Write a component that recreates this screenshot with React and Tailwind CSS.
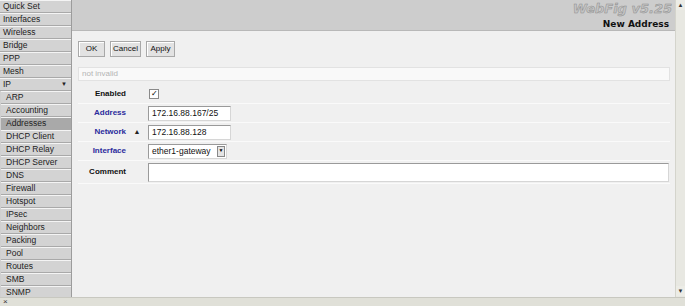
import React from 'react';

const menu = [
  { label: 'Quick Set' },
  { label: 'Interfaces' },
  { label: 'Wireless' },
  { label: 'Bridge' },
  { label: 'PPP' },
  { label: 'Mesh' },
  { label: 'IP', open: true },
  { label: 'ARP', sub: true },
  { label: 'Accounting', sub: true },
  { label: 'Addresses', sub: true, active: true },
  { label: 'DHCP Client', sub: true },
  { label: 'DHCP Relay', sub: true },
  { label: 'DHCP Server', sub: true },
  { label: 'DNS', sub: true },
  { label: 'Firewall', sub: true },
  { label: 'Hotspot', sub: true },
  { label: 'IPsec', sub: true },
  { label: 'Neighbors', sub: true },
  { label: 'Packing', sub: true },
  { label: 'Pool', sub: true },
  { label: 'Routes', sub: true },
  { label: 'SMB', sub: true },
  { label: 'SNMP', sub: true },
];

const Row = ({ label, blue, marker, children, tall }) => (
  <div className={`flex items-center border-b border-[#fafafa] ${tall ? 'h-[23px]' : 'h-[19px]'}`}>
    <div className={`w-[48px] text-right font-bold ${blue ? 'text-[#2b2b9c]' : 'text-[#111]'}`}>{label}</div>
    <div className="w-[22px] flex justify-center text-[7px] text-[#222]">{marker}</div>
    <div className="flex-1 pr-[3px]">{children}</div>
  </div>
);

const Input = ({ value, className }) => (
  <div className={`h-[15px] bg-white border border-[#9a9a9a] border-r-[#d6d6d6] border-b-[#d6d6d6] px-[3px] leading-[13px] text-[8.5px] text-[#111] ${className}`}>
    {value}
  </div>
);

const Btn = ({ children, w }) => (
  <div className={`${w} h-[16px] flex items-center justify-center bg-[#e2e2e2] border border-[#a8a8a8] shadow-[inset_1px_1px_0_#fff] text-[8px] text-[#111]`}>
    {children}
  </div>
);

export default function App() {
  return (
    <div className="w-[685px] h-[306px] flex flex-col bg-[#f0f0f0] text-[8px] overflow-hidden" style={{ fontFamily: '"Liberation Sans", Arial, sans-serif' }}>
      <div className="flex flex-1 min-h-0">
        {/* Menu */}
        <div className="w-[72px] flex flex-col bg-[#d0d0d0] border-r border-[#9c9c9c]">
          {menu.map((m) => (
            <div
              key={m.label}
              className={`h-[13px] shrink-0 flex items-center justify-between border-b border-t border-t-[#f4f4f4] border-b-[#a9a9a9] pr-[4px] text-[8.5px] ${
                m.sub ? 'pl-[5px] ml-[1px]' : 'pl-[3px]'
              } ${m.active ? 'bg-[#a9a9a9]' : 'bg-[#d3d3d3]'} text-[#222]`}
            >
              <span>{m.label}</span>
              {m.open && <span className="text-[6px]">▼</span>}
            </div>
          ))}
          <div className="flex-1 bg-[#d0d0d0]" />
        </div>

        {/* Main */}
        <div className="flex-1 flex flex-col min-w-0">
          <div className="h-[31px] shrink-0 bg-[#cdcdcd] border-b border-[#b8b8b8] flex flex-col items-end pr-[3px]">
            <div
              className="text-[13px] font-bold italic leading-[15px] mt-[1px] text-[#c4c4c4]"
              style={{ fontFamily: '"DejaVu Sans", sans-serif', WebkitTextStroke: '0.5px #8e8e8e' }}
            >
              WebFig v5.25
            </div>
            <div className="text-[9px] font-bold leading-[12px] mt-[2px] text-[#111] pr-[3px]" style={{ fontFamily: '"DejaVu Sans", sans-serif' }}>
              New Address
            </div>
          </div>

          <div className="flex-1 pl-[6px] pr-[5px]">
            <div className="flex gap-[5px] mt-[10px]">
              <Btn w="w-[27px]">OK</Btn>
              <Btn w="w-[31px]">Cancel</Btn>
              <Btn w="w-[29px]">Apply</Btn>
            </div>

            <div className="mt-[10px] h-[14px] bg-[#f9f9f9] border border-[#e2e2e2] text-[#b4b4b4] text-[8px] leading-[12px] px-[3px]">
              not invalid
            </div>

            <div className="mt-[4px]">
              <Row label="Enabled">
                <div className="w-[10px] h-[10px] ml-[1px] bg-white border border-[#8a8a8a] flex items-center justify-center text-[8px] leading-none">
                  ✓
                </div>
              </Row>
              <Row label="Address" blue>
                <Input value="172.16.88.167/25" className="w-[83px]" />
              </Row>
              <Row label="Network" blue marker="▲">
                <Input value="172.16.88.128" className="w-[83px]" />
              </Row>
              <Row label="Interface" blue>
                <div className="w-[79px] h-[15px] flex bg-white border border-[#9a9a9a] border-r-[#d6d6d6] border-b-[#d6d6d6]">
                  <div className="flex-1 px-[3px] leading-[13px] text-[8.5px] text-[#111]">ether1-gateway</div>
                  <div className="w-[8px] my-[1px] mr-[1px] bg-[#e4e4e4] border border-[#888] flex items-center justify-center text-[5px]">▼</div>
                </div>
              </Row>
              <Row label="Comment" tall>
                <div className="h-[19px] mr-[-2px] bg-white border border-[#9a9a9a] border-r-[#d6d6d6] border-b-[#d6d6d6]" />
              </Row>
            </div>
          </div>
        </div>

        {/* Scrollbar */}
        <div className="w-[10px] flex flex-col bg-[#e8e8e2] border-l border-[#d4d4cc]">
          <div className="h-[10px] bg-[#ecece6] flex items-center justify-center text-[6px] text-[#333]">▲</div>
          <div className="flex-1" />
          <div className="h-[10px] bg-[#ecece6] flex items-center justify-center text-[6px] text-[#333] mb-[1px]">▼</div>
        </div>
      </div>
      <div className="h-[9px] shrink-0 bg-[#e0e0d8] border-t border-[#c8c8c0] flex items-center pl-[3px] text-[8px] leading-none text-[#333]">
        ×
      </div>
    </div>
  );
}
